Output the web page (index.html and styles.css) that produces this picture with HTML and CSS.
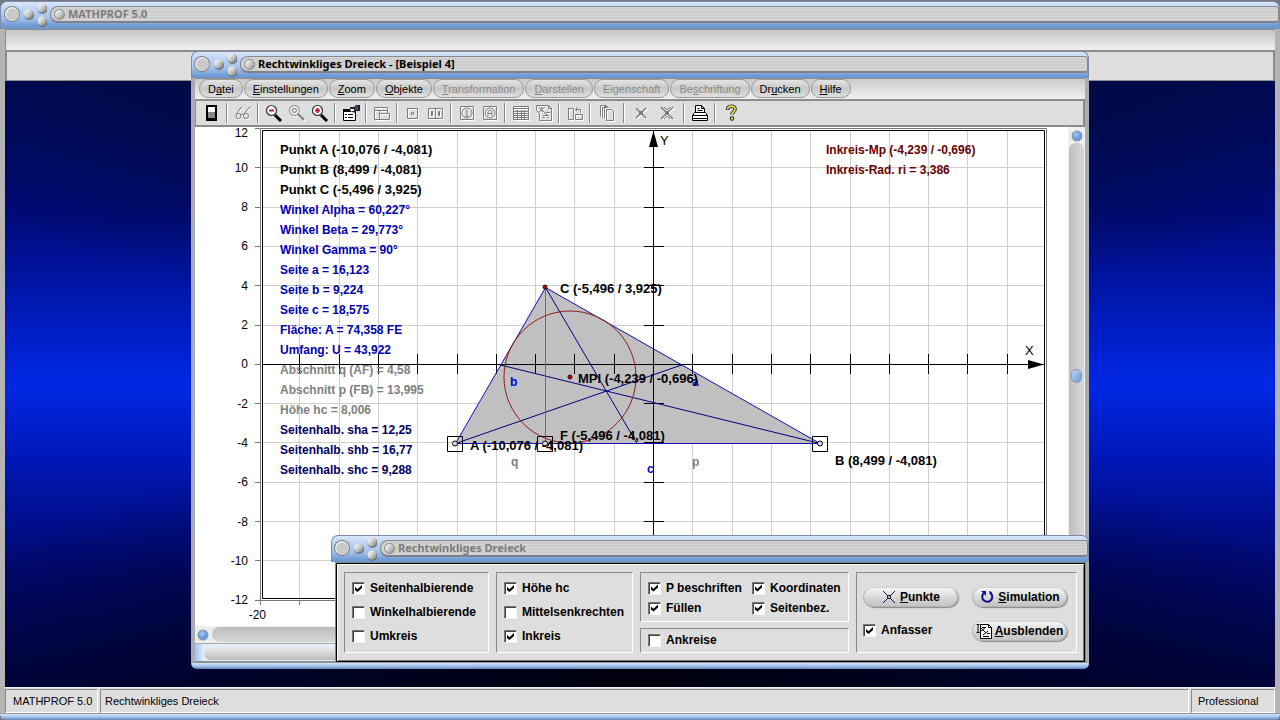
FILE: index.html
```html
<!DOCTYPE html>
<html lang="de">
<head>
<meta charset="utf-8">
<title>MATHPROF 5.0</title>
<link rel="stylesheet" href="styles.css">
</head>
<body>
<svg class="defs" aria-hidden="true">
  <defs>
    <linearGradient id="orbFill" x1="0" y1="0" x2="1" y2="1">
      <stop offset="0" stop-color="#ffffff"/><stop offset=".45" stop-color="#d2d2d2"/><stop offset="1" stop-color="#7c7c7c"/>
    </linearGradient>
    <radialGradient id="blueFill" cx=".4" cy=".35">
      <stop offset="0" stop-color="#a4c8f4"/><stop offset="1" stop-color="#6a98d4"/>
    </radialGradient>
    <symbol id="orbs" viewBox="0 0 46 27">
      <circle cx="11" cy="13" r="8" fill="#7b7f86"/>
      <circle cx="11" cy="13" r="7" fill="#f2f2f2"/>
      <circle cx="11.500" cy="13.500" r="6.300" fill="#c9c9c9"/>
      <circle cx="28" cy="14" r="5" fill="#6c7684"/><circle cx="27.500" cy="13" r="4.500" fill="url(#orbFill)"/>
      <circle cx="41.500" cy="8" r="5" fill="#6c7684"/><circle cx="41" cy="7" r="4.500" fill="url(#orbFill)"/>
      <circle cx="41.500" cy="21" r="5" fill="#6c7684"/><circle cx="41" cy="20" r="4.500" fill="url(#orbFill)"/>
    </symbol>
    <symbol id="blueOrb" viewBox="0 0 12 12">
      <circle cx="6" cy="6" r="5.500" fill="#909aa8"/><circle cx="6" cy="6" r="4.500" fill="url(#blueFill)"/>
    </symbol>
  </defs>
</svg>

<div class="app">
  <header class="title title-main">
    <svg class="orbs"><use href="#orbs"/></svg>
    <div class="groove"><span class="knob"></span><h1 class="caption muted">MATHPROF 5.0</h1></div>
  </header>
  <div class="app-body">
    <div class="app-menu"></div>
    <div class="app-tools"></div>
    <main class="desktop"></main>
    <footer class="status">
      <span class="cell cell-name">MATHPROF 5.0</span>
      <span class="cell cell-info">Rechtwinkliges Dreieck</span>
      <span class="cell cell-edition">Professional</span>
    </footer>
  </div>
  <div class="bottom-edge"></div>

  <section class="window window-plot">
    <header class="title">
      <svg class="orbs"><use href="#orbs"/></svg>
      <div class="groove"><span class="knob"></span><h2 class="caption">Rechtwinkliges Dreieck - [Beispiel 4]</h2></div>
    </header>
    <div class="window-body">
      <nav class="menu">
        <button class="pill">D<u>a</u>tei</button>
        <button class="pill"><u>E</u>instellungen</button>
        <button class="pill"><u>Z</u>oom</button>
        <button class="pill"><u>O</u>bjekte</button>
        <button class="pill" disabled><u>T</u>ransformation</button>
        <button class="pill" disabled><u>D</u>arstellen</button>
        <button class="pill" disabled>Ei<u>g</u>enschaft</button>
        <button class="pill" disabled>Be<u>s</u>chriftung</button>
        <button class="pill">Dr<u>u</u>cken</button>
        <button class="pill"><u>H</u>ilfe</button>
      </nav>
      <div class="tools">
        <div class="group">
          <button class="tool" aria-label="Beenden"><svg viewBox="0 0 18 18"><path d="M3 1h11v16H3z" fill="#000"/><path d="M5 3h7v5H5z" fill="#fff"/><path d="M5 8h7v6H5z" fill="#888"/></svg></button>
        </div>
        <div class="group">
          <button class="tool off" aria-label="Ansicht" disabled><svg viewBox="0 0 18 18"><path d="M2.500 10.500 6 4.500 8.500 3M10 10.500l4-6L17 3M7 11q1.500-2 3 0"/><circle cx="4.500" cy="12" r="2.500"/><circle cx="12" cy="12" r="2.500"/></svg></button>
        </div>
        <div class="group">
          <button class="tool" aria-label="Verkleinern"><svg viewBox="0 0 18 18"><path d="m10 11 6 6" stroke="#000" stroke-width="3"/><circle cx="6.500" cy="6.500" r="5" fill="#fff" stroke="#333" stroke-width="1.200"/><path d="M4 6.500h5" stroke="#c8102c" stroke-width="2"/></svg></button>
          <button class="tool off" aria-label="Originalgröße" disabled><svg viewBox="0 0 18 18"><path d="m10 10 6 6" stroke-width="2"/><circle cx="6.500" cy="6.500" r="5"/><circle cx="6.500" cy="6.500" r="2"/></svg></button>
          <button class="tool" aria-label="Vergrößern"><svg viewBox="0 0 18 18"><path d="m10 11 6 6" stroke="#000" stroke-width="3"/><circle cx="6.500" cy="6.500" r="5" fill="#fff" stroke="#333" stroke-width="1.200"/><path d="M4 6.500h5M6.500 4v5" stroke="#c8102c" stroke-width="2"/></svg></button>
        </div>
        <div class="group">
          <button class="tool" aria-label="Eigenschaften"><svg viewBox="0 0 18 18"><path d="M1.500 5.500h12v11h-12z" fill="#fff" stroke="#000"/><path d="M1 5h8v3H1z" fill="#000"/><path d="M3 10.500h2M3 13.500h2M6 10.500h5M6 13.500h5" stroke="#000"/><path d="M8 3h4l2-2h4v6h-4l-1 2-5-2z" fill="#222"/><path d="M13 2h3v4h-3z" fill="#46467c"/><path d="M8 5h4v2H9z" fill="#fff"/></svg></button>
        </div>
        <div class="group">
          <button class="tool off" aria-label="Fenster" disabled><svg viewBox="0 0 18 18"><path d="M1.500 3.500h13v3h-13zM1.500 6.500v9h15M6.500 6.500v9M6.500 9.500h10v6M14.500 6.500v3" /></svg></button>
        </div>
        <div class="group">
          <button class="tool off" aria-label="Punkt" disabled><svg viewBox="0 0 18 18"><path d="M3.500 4.500h10v10h-10z"/><path d="M7.500 8.500h2v2h-2z"/></svg></button>
          <button class="tool off" aria-label="Punktpaar" disabled><svg viewBox="0 0 18 18"><path d="M1.500 4.500h14v10h-14zM8.500 4.500v10M4.500 7.500h1v4h-1zM11.500 7.500h1v4h-1z"/></svg></button>
        </div>
        <div class="group">
          <button class="tool off" aria-label="Info" disabled><svg viewBox="0 0 18 18"><path d="M2.500 2.500h13v13h-13zM9 6v6M7.500 7 9 6M7.500 12.500h3"/><circle cx="9" cy="9" r="5"/></svg></button>
          <button class="tool off" aria-label="Name" disabled><svg viewBox="0 0 18 18"><path d="M2.500 2.500h13v13h-13zM7 12V7.500L9 6l2 1.500V12M7 9.500h4"/><circle cx="9" cy="9" r="5"/></svg></button>
        </div>
        <div class="group">
          <button class="tool off" aria-label="Tabelle" disabled><svg viewBox="0 0 18 18"><path d="M1.500 2.500h15v13h-15zM2 4.500h14M2 7.500h14M2 9.500h14M2 11.500h14M2 13.500h14M5.500 6v9M9.500 6v9M12.500 6v9"/></svg></button>
          <button class="tool off" aria-label="Dokument" disabled><svg viewBox="0 0 18 18"><path d="M4.500 16.500v-7M4.500 16.500h12V4.500l-3-3h-12v5l3 3M4 3l8 8M4 8l6-5M7 3v5M13.500 1.500v3h3M11 8.500h4M8 11.500h6M7 13.500h3M12 13.500h2"/></svg></button>
        </div>
        <div class="group">
          <button class="tool off" aria-label="Drehen" disabled><svg viewBox="0 0 18 18"><path d="M2.500 4.500h5v11h-5zM9.500 10.500h7v5h-7zM9.500 5.500h5v3M11.500 3.500l-2 2 2 2"/></svg></button>
        </div>
        <div class="group wide">
          <button class="tool off" aria-label="Kopieren" disabled><svg viewBox="0 0 18 18"><path d="M2.500 12.500v-11h6M4.500 14.500v-11h6M6.500 14.500v-12h3M8.500 5.500h5l2 2v9h-7z"/></svg></button>
        </div>
        <div class="group wide">
          <button class="tool off" aria-label="Schnittpunkt" disabled><svg viewBox="0 0 18 18"><path d="m4 4 10 10M14 4 4 14" stroke-width="1.500"/><path d="M7.500 7.500h3v3h-3z"/></svg></button>
          <button class="tool off" aria-label="Schnittpunkte" disabled><svg viewBox="0 0 18 18"><path d="m3 3 12 12M15 3 3 15" stroke-width="1.500"/><path d="M6 3l3 3 3-3M6 15l3-3 3 3M7.500 7.500h3v3h-3z"/></svg></button>
        </div>
        <div class="group">
          <button class="tool" aria-label="Drucken"><svg viewBox="0 0 18 18"><path d="M4.500 8.500v-7h6l3 3v4" fill="#fff" stroke="#000"/><path d="M10.500 1.500v3h3M6.500 4.500h2M6.500 6.500h5" stroke="#000" fill="none"/><path d="M3.500 8.500h11l2 3v5h-15v-5z" fill="#fff" stroke="#000"/><path d="M1.500 11.500h15M2 14.500h14" stroke="#000"/></svg></button>
        </div>
        <div class="group last">
          <button class="tool" aria-label="Hilfe"><svg viewBox="0 0 18 18"><path d="M5.500 6c0-5 8-4.500 7.500-1 0 3-3 3-3 5.500" fill="none" stroke="#222" stroke-width="3.600"/><path d="M5.500 5.500c0-4.500 8-4 7.500-.5 0 3-3 3-3 5.500" fill="none" stroke="#e8e050" stroke-width="1.800"/><circle cx="10" cy="14.500" r="2.200" fill="#222"/><circle cx="10" cy="14.500" r="1.200" fill="#e8e050"/></svg></button>
        </div>
      </div>
      <div class="plot-row">
        <svg class="plot" viewBox="195 127 873 499" preserveAspectRatio="xMinYMin meet" role="img" aria-label="Rechtwinkliges Dreieck im Koordinatensystem">
          <path class="grid" d="M299.500 131V598M339.500 131V598M378.500 131V598M417.500 131V598M457.500 131V598M496.500 131V598M535.500 131V598M574.500 131V598M614.500 131V598M692.500 131V598M732.500 131V598M771.500 131V598M810.500 131V598M850.500 131V598M889.500 131V598M928.500 131V598M967.500 131V598M1007.500 131V598M263 167.500H1044M263 207.500H1044M263 246.500H1044M263 285.500H1044M263 325.500H1044M263 403.500H1044M263 442.500H1044M263 482.500H1044M263 521.500H1044M263 560.500H1044"/>
          <path class="frame-outer" d="M260.500 128.500H1046.500V600.500H260.500zM255 128.500h5M255 167.500h5M255 207.500h5M255 246.500h5M255 285.500h5M255 325.500h5M255 364.500h5M255 403.500h5M255 442.500h5M255 482.500h5M255 521.500h5M255 560.500h5M255 600.500h5M260.500 600v5M299.500 600v5"/>
          <path class="frame" d="M262.500 130.500H1044.500V598.500H262.500z"/>
          <path class="area" d="M455.500 443.500H820L545.500 287.500z"/>
          <path class="axis" d="M263 364.500H1044M653.500 131V598M299.500 354v20M339.500 354v20M378.500 354v20M417.500 354v20M457.500 354v20M496.500 354v20M535.500 354v20M574.500 354v20M614.500 354v20M692.500 354v20M732.500 354v20M771.500 354v20M810.500 354v20M850.500 354v20M889.500 354v20M928.500 354v20M967.500 354v20M1007.500 354v20M644 167.500h20M644 207.500h20M644 246.500h20M644 285.500h20M644 325.500h20M644 403.500h20M644 442.500h20M644 482.500h20M644 521.500h20"/>
          <path d="M1028 360l16 4.500-16 4.500zM649 147l4.500-16 4.500 16z"/>
          <path class="side" d="M455.500 443.500H820L545.500 287.500z"/>
          <path class="median" d="M455.500 443.500 683 364.500M820 443.500 500.500 365M545.500 287.500 637 443.500"/>
          <path class="height" d="M545.500 287V443"/>
          <circle class="incircle" cx="570" cy="377" r="66"/>
          <g class="handle"><path d="M447.500 436.500h15v15h-15zM537.500 436.500h15v15h-15zM812.500 436.500h15v15h-15z"/><circle cx="455" cy="443.500" r="2.500"/><circle cx="545" cy="443.500" r="2.500"/><circle cx="820" cy="443.500" r="2.500"/></g>
          <g class="dot"><circle cx="545" cy="287" r="2"/><circle cx="570" cy="377" r="2"/></g>
          <g class="num">
            <text x="248" y="137">12</text><text x="248" y="172">10</text><text x="248" y="211">8</text><text x="248" y="250">6</text><text x="248" y="290">4</text><text x="248" y="329">2</text><text x="248" y="368">0</text><text x="248" y="408">-2</text><text x="248" y="447">-4</text><text x="248" y="486">-6</text><text x="248" y="526">-8</text><text x="248" y="565">-10</text><text x="248" y="604">-12</text><text x="266" y="619">-20</text>
          </g>
          <g class="axis-name"><text x="660" y="145">Y</text><text x="1025" y="355">X</text></g>
          <g class="label">
            <g class="coords">
              <text x="280" y="154">Punkt A (-10,076 / -4,081)</text>
              <text x="280" y="174">Punkt B (8,499 / -4,081)</text>
              <text x="280" y="194">Punkt C (-5,496 / 3,925)</text>
            </g>
            <g class="blue">
              <text x="280" y="214">Winkel Alpha = 60,227°</text>
              <text x="280" y="234">Winkel Beta = 29,773°</text>
              <text x="280" y="254">Winkel Gamma = 90°</text>
              <text x="280" y="274">Seite a = 16,123</text>
              <text x="280" y="294">Seite b = 9,224</text>
              <text x="280" y="314">Seite c = 18,575</text>
              <text x="280" y="334">Fläche: A = 74,358 FE</text>
              <text x="280" y="354">Umfang: U = 43,922</text>
            </g>
            <g class="gray">
              <text x="280" y="374">Abschnitt q (AF) = 4,58</text>
              <text x="280" y="394">Abschnitt p (FB) = 13,995</text>
              <text x="280" y="414">Höhe hc = 8,006</text>
              <text x="511" y="466">q</text><text x="692" y="466">p</text>
            </g>
            <g class="navy">
              <text x="280" y="434">Seitenhalb. sha = 12,25</text>
              <text x="280" y="454">Seitenhalb. shb = 16,77</text>
              <text x="280" y="474">Seitenhalb. shc = 9,288</text>
            </g>
            <g class="maroon">
              <text x="826" y="154">Inkreis-Mp (-4,239 / -0,696)</text>
              <text x="826" y="174">Inkreis-Rad. ri = 3,386</text>
            </g>
            <g class="mark"><text x="510" y="386">b</text><text x="692" y="386">a</text><text x="647" y="473">c</text></g>
            <g class="coords">
              <text x="560" y="293">C (-5,496 / 3,925)</text>
              <text x="578" y="383">MPI (-4,239 / -0,696)</text>
              <text x="560" y="440">F (-5,496 / -4,081)</text>
              <text x="470" y="450">A (-10,076 / -4,081)</text>
              <text x="835" y="465">B (8,499 / -4,081)</text>
            </g>
          </g>
        </svg>
        <div class="vscroll">
          <svg class="blue-orb"><use href="#blueOrb"/></svg>
          <div class="vtrack"><span class="vthumb"></span></div>
        </div>
      </div>
      <div class="hscroll"><svg class="blue-orb"><use href="#blueOrb"/></svg><div class="htrack"></div></div>
      <div class="hbar"><div class="hbar-pill"></div></div>
    </div>
    <div class="bottom-edge"></div>
  </section>

  <section class="window window-options">
    <header class="title">
      <svg class="orbs"><use href="#orbs"/></svg>
      <div class="groove"><span class="knob"></span><h2 class="caption muted">Rechtwinkliges Dreieck</h2></div>
    </header>
    <form class="options">
      <div class="panel">
        <label class="check"><input type="checkbox" checked>Seitenhalbierende</label>
        <label class="check"><input type="checkbox">Winkelhalbierende</label>
        <label class="check"><input type="checkbox">Umkreis</label>
      </div>
      <div class="panel">
        <label class="check"><input type="checkbox" checked>Höhe hc</label>
        <label class="check"><input type="checkbox">Mittelsenkrechten</label>
        <label class="check"><input type="checkbox" checked>Inkreis</label>
      </div>
      <div class="panel-stack">
        <div class="panel panel-pairs">
          <label class="check"><input type="checkbox" checked>P beschriften</label>
          <label class="check"><input type="checkbox" checked>Koordinaten</label>
          <label class="check"><input type="checkbox" checked>Füllen</label>
          <label class="check"><input type="checkbox" checked>Seitenbez.</label>
        </div>
        <div class="panel panel-single">
          <label class="check"><input type="checkbox">Ankreise</label>
        </div>
      </div>
      <div class="panel panel-actions">
        <button type="button" class="action"><svg viewBox="0 0 16 16"><path d="m2 2 12 12M14 2 2 14" stroke="#101060"/><circle cx="8" cy="8" r="1.500" fill="#fff" stroke="#000"/></svg><span><u>P</u>unkte</span></button>
        <button type="button" class="action"><svg viewBox="0 0 16 16"><path d="M4.500 4.500a5 5 0 1 0 7-.5" fill="none" stroke="#10108a" stroke-width="2"/><path d="M2 2h5v5z" fill="#10108a"/><path d="m10 2 3 1-2 3" fill="#10108a"/></svg><span><u>S</u>imulation</span></button>
        <label class="check"><input type="checkbox" checked>Anfasser</label>
        <button type="button" class="action"><svg viewBox="0 0 16 16"><path d="M4.500 1.500h8l3 3v11h-11z" fill="#fff" stroke="#000"/><path d="M.5 1.500h3M.5 9.500h3M2 1.500v8M4 4l6 6M4 9l6-5M12.500 1.500v3h3M7 12l5-4M7 13.500h6M11 10.500h3M6 4.500h4" fill="none" stroke="#000"/></svg><span><u>A</u>usblenden</span></button>
      </div>
    </form>
    <div class="bottom-edge"></div>
  </section>
</div>
</body>
</html>
```
FILE: styles.css
```css
* { box-sizing: border-box; }

body {
  margin: 0;
  background: #77787f;
  color: #000;
  font-family: "Liberation Sans", Arial, sans-serif;
  font-size: 11px;
}

h1, h2 { margin: 0; }
button { font: inherit; color: inherit; margin: 0; }
u { text-underline-offset: 1px; }
.defs { position: absolute; width: 0; height: 0; }

.app {
  position: relative;
  display: flex;
  flex-direction: column;
  height: 100vh;
  min-height: 720px;
  padding-top: 1px;
}

.title {
  display: flex;
  flex: none;
  align-items: flex-start;
  height: 27px;
  border: 1px solid #7d8ca8;
  border-width: 1px 1px 0;
  background: linear-gradient(#dbe7fb 0, #c2d6f5 6px, #a3c1ea 16px, #6d9ad5 24px, #7096c8 100%);
  border-radius: 7px 7px 0 0;
}
.title-main { height: 28px; }
.orbs { flex: none; width: 46px; height: 27px; margin: -1px 0 0 -1px; }
.title-main .orbs { margin-left: 0; }
.groove {
  display: flex;
  flex: 1;
  align-items: center;
  gap: 3px;
  height: 17px;
  margin: 4px 0 0 3px;
  padding-left: 3px;
  border: 1px solid #85888d;
  border-bottom: 2px solid #7c8288;
  border-radius: 8px 3px 3px 8px;
  background: repeating-linear-gradient(#d6d6d6 0, #d6d6d6 1px, #c6c6c6 2px, #d0d0d0 3px);
}
.knob {
  width: 11px;
  height: 11px;
  border: 1px solid #888;
  border-radius: 50%;
  background: linear-gradient(135deg, #fff, #ccc 50%, #888);
}
.caption {
  font-family: "Noto Sans", "Liberation Sans", sans-serif;
  font-size: 11px;
  line-height: 14px;
  font-weight: bold;
  white-space: nowrap;
}
.muted { color: #7b7b7b; }

.app-body {
  display: flex;
  flex: 1;
  flex-direction: column;
  border: solid #b4b4b4;
  border-width: 0 5px;
}
.app-menu {
  height: 21px;
  border: 1px solid #8c8c8c;
  border-width: 1px 0 0 1px;
  background: linear-gradient(#c4c4c4, #f0f0f0);
}
.app-tools {
  height: 31px;
  border: 2px solid #8c8c8c;
  border-width: 2px 2px 1px;
  background: #dedede;
}
.desktop {
  flex: 1;
  background:
    radial-gradient(ellipse 60% 42% at 50% 0, rgba(0, 10, 30, .85), transparent),
    radial-gradient(ellipse 60% 42% at 50% 100%, rgba(0, 0, 10, .95), transparent),
    linear-gradient(#000a58 0, #000a78 22%, #001ab8 38%, #0028e4 50%, #0018b8 62%, #000870 80%, #000440 100%);
}
.status {
  display: flex;
  gap: 2px;
  height: 26px;
  padding-top: 1px;
  border-top: 1px solid #eee;
  background: #dedede;
}
.cell {
  padding: 0 4px;
  border: 1px solid #fff;
  border-top-color: #888;
  border-left-color: #888;
  line-height: 22px;
  white-space: nowrap;
}
.cell-name { padding: 0 7px; width: 93px; }
.cell-info { flex: 1; }
.cell-edition { width: 84px; padding-left: 6px; }
.bottom-edge {
  flex: none;
  height: 7px;
  border-top: 1px solid #999;
  border-radius: 0 0 6px 6px;
  background: linear-gradient(#d0e2fa, #a4c4ee 50%, #6284b4);
}

.window { position: absolute; display: flex; flex-direction: column; }
.window-plot { left: 191px; right: 191px; top: 51px; bottom: 51px; }
.window-options { left: 331px; right: 191px; top: 535px; bottom: 51px; }

.window-body {
  display: flex;
  flex: 1;
  flex-direction: column;
  min-height: 0;
  border: solid #a8acb4;
  border-width: 0 4px;
  background: #dedede;
}
.menu {
  display: flex;
  align-items: flex-start;
  gap: 1px;
  flex: none;
  height: 21px;
  padding: 0 4px;
  border-top: 1px solid #8c8c8c;
  background: linear-gradient(#cacaca, #f0f0f0);
}
.pill {
  height: 19px;
  padding: 0 8px;
  border: 1px solid #9a9a9a;
  border-radius: 9px;
  background: linear-gradient(#e4e4e4, #c8c8c8 50%, #e0e0e0);
  line-height: 14px;
  white-space: nowrap;
}
.pill:disabled { color: #8a8a8a; }

.tools {
  display: flex;
  flex: none;
  align-items: center;
  height: 28px;
  border: 2px solid #8c8c8c;
  border-width: 2px 2px 2px 1px;
  background: #dedede;
}
.group {
  display: flex;
  flex: none;
  height: 20px;
  padding: 0 4px;
  border-right: 1px solid #888;
  box-shadow: 1px 0 #fff;
}
.group .tool { width: 23px; }
.group.wide .tool { width: 26px; }
.group.last { border: 0; box-shadow: none; }
.tool {
  display: flex;
  align-items: center;
  justify-content: center;
  margin-right: -1px;
  padding: 0;
  border: 0;
  background: none;
}
.group .tool + .tool { margin-left: 1px; }
.tool svg { flex: none; width: 18px; height: 18px; }
.off svg { fill: none; stroke: #7c7c7c; filter: drop-shadow(1px 1px #fff); }

.plot-row { display: flex; flex: 1; min-height: 0; background: #fff; }
.plot { flex: 1; min-width: 0; width: 100%; height: 100%; }
.grid { stroke: #cfcfcf; }
.frame-outer { fill: none; stroke: #777; }
.frame { fill: none; stroke: #000; }
.area { fill: #c0c0c0; }
.axis { stroke: #000; }
.side { fill: none; stroke: #1010b0; }
.median { stroke: #000080; }
.height { stroke: #707070; }
.incircle { fill: none; stroke: #8c1c1c; }
.handle { fill: none; stroke: #000; }
.handle circle { fill: #ddd; }
.dot { fill: #a01010; stroke: #400; }
.num { font-size: 12px; text-anchor: end; }
.axis-name { font-size: 13px; }
.label { font-size: 12px; font-weight: bold; }
.coords { font-size: 13px; }
.blue { fill: #0000b0; }
.mark { fill: #0000dc; }
.gray { fill: #808080; }
.navy { fill: #000060; }
.maroon { fill: #680000; }

.blue-orb { flex: none; width: 12px; height: 12px; }
.vscroll {
  display: flex;
  flex: none;
  flex-direction: column;
  align-items: center;
  gap: 1px;
  width: 17px;
  padding: 3px 1px 17px;
  background: #eee;
}
.vtrack {
  display: flex;
  flex: 1;
  align-items: center;
  justify-content: center;
  align-self: stretch;
  border-radius: 7px 7px 0 0;
  background: linear-gradient(90deg, #bdbdbd, #d8d8d8);
}
.vthumb {
  width: 11px;
  height: 14px;
  border: 1px solid #909aa8;
  border-radius: 5px;
  background: linear-gradient(135deg, #b8d6f8, #6a98d4);
}
.hscroll {
  display: flex;
  flex: none;
  align-items: center;
  gap: 3px;
  height: 17px;
  padding-left: 2px;
  background: #eee;
}
.htrack { flex: 1; height: 15px; border-radius: 7px 0 0 7px; background: linear-gradient(#bcbcbc, #d8d8d8); }
.hbar {
  flex: none;
  height: 19px;
  padding: 3px 0 2px 9px;
  border-top: 1px solid #aaa;
  border-bottom: 1px solid #888;
  background: linear-gradient(90deg, #9cc4f4 0, #e4eefa 9px);
}
.hbar-pill { height: 13px; border-radius: 7px 0 0 7px; background: linear-gradient(#ececec, #bcbcbc); }

.window-options::before {
  content: "";
  position: absolute;
  inset: 27px 0 6px;
  z-index: -1;
  background: #b0b4bc;
}
.options {
  display: grid;
  flex: 1;
  grid-template-columns: 145fr 137fr 209fr 221fr;
  gap: 7px;
  min-height: 0;
  padding: 8px 7px;
  margin: 1px 4px 0 5px;
  border: 1px solid #000;
  outline: 1px solid #888;
  box-shadow: inset 1px 1px #fff, inset -1px -1px #777;
  background: #dedede;
  font-size: 12px;
  font-weight: bold;
}
.panel {
  display: flex;
  flex-direction: column;
  justify-content: center;
  gap: 9px;
  min-width: 0;
  padding: 0 7px;
  border: 1px solid #fff;
  border-top-color: #888;
  border-left-color: #888;
}
.panel-stack { display: grid; grid-template-rows: 2fr 1fr; gap: 6px; }
.panel-pairs {
  display: grid;
  grid-template-columns: 104px 1fr;
  align-content: center;
  justify-content: start;
  gap: 5px 0;
  padding-top: 2px;
}
.check { display: flex; align-items: center; gap: 5px; height: 15px; line-height: 15px; white-space: nowrap; }
.check input {
  flex: none;
  appearance: none;
  width: 13px;
  height: 13px;
  margin: 0;
  border: 1px solid #f4f4f4;
  border-top-color: #777;
  border-left-color: #777;
  box-shadow: inset 1px 1px #444;
  background: #fff;
}
.check input:checked::before {
  content: "";
  display: block;
  width: 7px;
  height: 7px;
  margin: 2px;
  background: #000;
  clip-path: polygon(0 29%, 35% 62%, 100% 0, 100% 42%, 35% 100%, 0 70%);
}
.panel-actions {
  display: grid;
  grid-template-columns: 95px 95px;
  grid-template-rows: 20px 20px;
  align-content: center;
  justify-content: space-between;
  align-items: center;
  row-gap: 14px;
  padding: 2px 9px 0 6px;
}
.action {
  display: flex;
  align-items: center;
  justify-content: center;
  gap: 3px;
  height: 20px;
  padding: 0;
  border: 1px solid #b4b4b4;
  border-top-color: #d0d0d0;
  border-radius: 10px;
  box-shadow: 1px 1px 1px #888;
  background: linear-gradient(#f6f6f6, #d4d4d4 60%, #c4c4c4);
  white-space: nowrap;
}
.action svg { flex: none; width: 16px; height: 16px; }
```
